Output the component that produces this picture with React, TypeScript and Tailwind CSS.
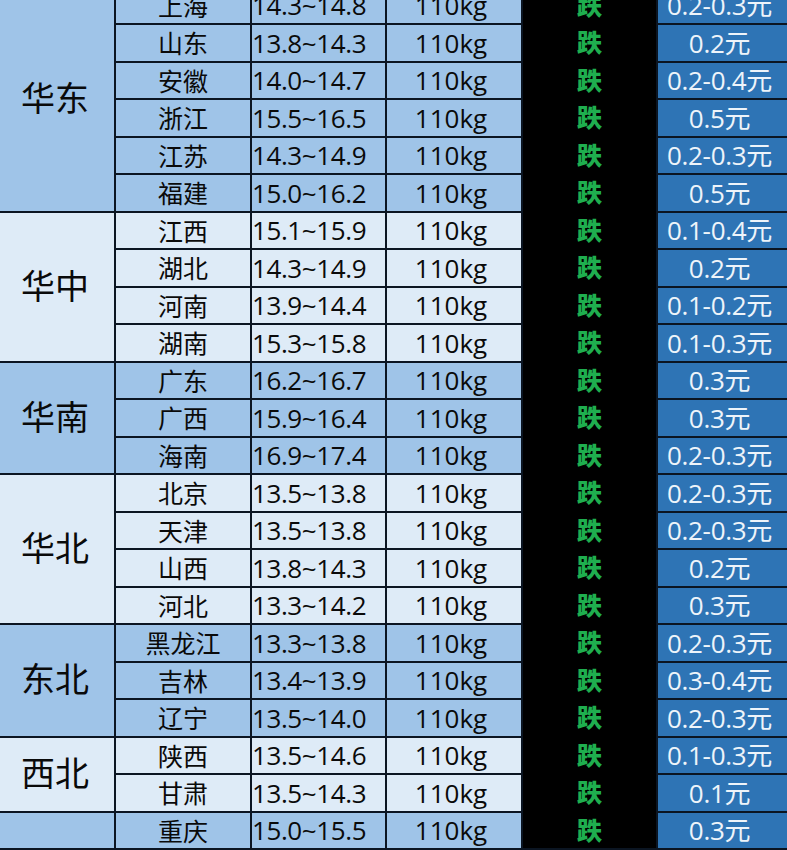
const DARK = "bg-[#9fc4e8]";
const LIGHT = "bg-[#deebf7]";

type Row = { prov: string; price: string; drop: string };
type Group = { region: string; dark: boolean; rows: Row[] };

const groups: Group[] = [
  {
    region: "华东",
    dark: true,
    rows: [
      { prov: "上海", price: "14.3~14.8", drop: "0.2-0.3元" },
      { prov: "山东", price: "13.8~14.3", drop: "0.2元" },
      { prov: "安徽", price: "14.0~14.7", drop: "0.2-0.4元" },
      { prov: "浙江", price: "15.5~16.5", drop: "0.5元" },
      { prov: "江苏", price: "14.3~14.9", drop: "0.2-0.3元" },
      { prov: "福建", price: "15.0~16.2", drop: "0.5元" },
    ],
  },
  {
    region: "华中",
    dark: false,
    rows: [
      { prov: "江西", price: "15.1~15.9", drop: "0.1-0.4元" },
      { prov: "湖北", price: "14.3~14.9", drop: "0.2元" },
      { prov: "河南", price: "13.9~14.4", drop: "0.1-0.2元" },
      { prov: "湖南", price: "15.3~15.8", drop: "0.1-0.3元" },
    ],
  },
  {
    region: "华南",
    dark: true,
    rows: [
      { prov: "广东", price: "16.2~16.7", drop: "0.3元" },
      { prov: "广西", price: "15.9~16.4", drop: "0.3元" },
      { prov: "海南", price: "16.9~17.4", drop: "0.2-0.3元" },
    ],
  },
  {
    region: "华北",
    dark: false,
    rows: [
      { prov: "北京", price: "13.5~13.8", drop: "0.2-0.3元" },
      { prov: "天津", price: "13.5~13.8", drop: "0.2-0.3元" },
      { prov: "山西", price: "13.8~14.3", drop: "0.2元" },
      { prov: "河北", price: "13.3~14.2", drop: "0.3元" },
    ],
  },
  {
    region: "东北",
    dark: true,
    rows: [
      { prov: "黑龙江", price: "13.3~13.8", drop: "0.2-0.3元" },
      { prov: "吉林", price: "13.4~13.9", drop: "0.3-0.4元" },
      { prov: "辽宁", price: "13.5~14.0", drop: "0.2-0.3元" },
    ],
  },
  {
    region: "西北",
    dark: false,
    rows: [
      { prov: "陕西", price: "13.5~14.6", drop: "0.1-0.3元" },
      { prov: "甘肃", price: "13.5~14.3", drop: "0.1元" },
    ],
  },
  {
    region: "",
    dark: true,
    rows: [{ prov: "重庆", price: "15.0~15.5", drop: "0.3元" }],
  },
];

const spanClass: Record<number, string> = {
  1: "row-span-1",
  2: "row-span-2",
  3: "row-span-3",
  4: "row-span-4",
  6: "row-span-6",
};

const cjk = { fontFamily: '"Noto Sans CJK SC", sans-serif' };

export default function App() {
  return (
    <div
      className="h-[850px] w-[787px] overflow-hidden bg-[#0b1522]"
      style={{ fontFamily: '"Open Sans", "Noto Sans CJK SC", sans-serif' }}
    >
      <div className="mt-[-12.5px] grid grid-cols-[114px_134px_133px_134px_133px_129px] auto-rows-[35.5px] gap-[2px] text-[#0a0a0a]">
        {groups.map((g) =>
          g.rows.map((r, i) => {
            const bg = g.dark ? DARK : LIGHT;
            return (
              <div key={r.prov} className="contents">
                {i === 0 && (
                  <div
                    className={`${spanClass[g.rows.length]} ${bg} flex items-center justify-center text-[34px] leading-none`}
                    style={cjk}
                  >
                    <span className="-ml-1 -mt-1">{g.region}</span>
                  </div>
                )}
                <div className={`${bg} flex items-center justify-center text-[25px] leading-none`} style={cjk}>
                  {r.prov}
                </div>
                <div className={`${bg} flex items-center whitespace-nowrap text-[26px] leading-none tracking-[-0.4px]`}>
                  {r.price}
                </div>
                <div className={`${bg} flex items-center justify-center pr-[6px] text-[26px] leading-none`}>
                  110kg
                </div>
                <div
                  className="-mt-[2px] h-[37.5px] bg-black flex items-center justify-center text-[25px] font-black leading-none text-[#1fae4f]"
                  style={cjk}
                >
                  跌
                </div>
                <div className="bg-[#2e74b5] flex items-center justify-center pr-[6px] whitespace-nowrap text-[26px] leading-none text-[#eef4fa] tracking-[-0.3px]">
                  {r.drop}
                </div>
              </div>
            );
          })
        )}
      </div>
    </div>
  );
}
